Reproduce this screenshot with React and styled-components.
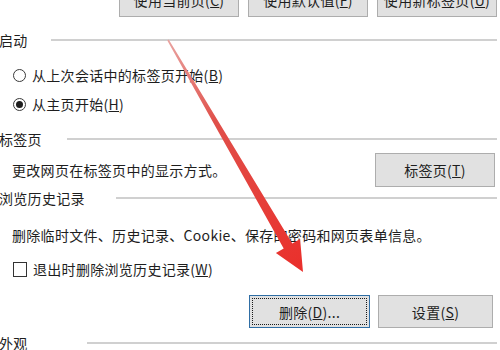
import React from "react";
import styled, { createGlobalStyle } from "styled-components";

const GlobalStyle = createGlobalStyle`
  html, body {
    margin: 0;
    padding: 0;
    background: #ffffff;
    overflow: hidden;
  }
  body {
    font-family: "Noto Sans CJK SC", "Noto Sans", sans-serif;
    color: #1e1e1e;
  }
`;

const Page = styled.div`
  position: relative;
  width: 500px;
  height: 350px;
  overflow: hidden;
  font-size: 14px;
  letter-spacing: 0.3px;
`;

const Panel = styled.div`
  display: flex;
  flex-direction: column;
  padding-right: 3px;
`;

const ButtonRow = styled.div`
  display: flex;
  justify-content: flex-end;
  align-items: center;
  gap: ${(p) => p.gap || 9}px;
  margin-top: ${(p) => p.top}px;
  padding-right: ${(p) => p.right || 0}px;
`;

const Button = styled.button`
  width: ${(p) => p.w || 120}px;
  height: ${(p) => p.h || 34}px;
  background: #e1e1e1;
  border: 1px solid ${(p) => (p.focused ? "#2f6ea5" : "#adadad")};
  outline: ${(p) => (p.focused ? "1px dotted #1a1a1a" : "none")};
  outline-offset: -4px;
  font-family: "Noto Sans CJK SC", "Noto Sans", sans-serif;
  font-size: 14px;
  letter-spacing: 0.3px;
  color: #1e1e1e;
  padding: 0;
  box-sizing: border-box;
`;

const Legend = styled.div`
  display: flex;
  align-items: center;
  height: 20px;
  margin-top: ${(p) => p.top}px;
`;

const LegendText = styled.span`
  width: ${(p) => p.w}px;
  flex: none;
  font-size: 14px;
  margin-left: -1px;
`;

const LegendLine = styled.div`
  flex: 1;
  height: 2px;
  background: #d0d0d0;
`;

const OptionRow = styled.div`
  display: flex;
  align-items: center;
  height: 22px;
  margin-top: ${(p) => p.top}px;
  padding-left: 13px;
  gap: 6px;
`;

const Radio = styled.span`
  width: 13px;
  height: 13px;
  border: 1px solid #3a3a3a;
  border-radius: 50%;
  box-sizing: border-box;
  display: flex;
  align-items: center;
  justify-content: center;
  &::after {
    content: "";
    width: 7px;
    height: 7px;
    border-radius: 50%;
    background: ${(p) => (p.checked ? "#1e1e1e" : "transparent")};
  }
`;

const Checkbox = styled.span`
  width: 14px;
  height: 15px;
  border: 1px solid #333;
  box-sizing: border-box;
`;

const DescRow = styled.div`
  display: flex;
  align-items: center;
  justify-content: space-between;
  height: ${(p) => p.h || 22}px;
  margin-top: ${(p) => p.top}px;
  padding-left: 12px;
  padding-right: ${(p) => p.right || 0}px;
`;

const Arrow = styled.svg`
  position: absolute;
  left: 0;
  top: 0;
  pointer-events: none;
`;

export default function App() {
  return (
    <Page>
      <GlobalStyle />
      <Panel>
        <ButtonRow top={-17} gap={9}>
          <Button>使用当前页(<u>C</u>)</Button>
          <Button>使用默认值(<u>F</u>)</Button>
          <Button>使用新标签页(<u>U</u>)</Button>
        </ButtonRow>

        <Legend top={13}>
          <LegendText w={52}>启动</LegendText>
          <LegendLine />
        </Legend>
        <OptionRow top={14}>
          <Radio />
          <span>从上次会话中的标签页开始(<u>B</u>)</span>
        </OptionRow>
        <OptionRow top={7}>
          <Radio checked />
          <span>从主页开始(<u>H</u>)</span>
        </OptionRow>

        <Legend top={14}>
          <LegendText w={68}>标签页</LegendText>
          <LegendLine />
        </Legend>
        <DescRow h={34} top={4} right={2}>
          <span>更改网页在标签页中的显示方式。</span>
          <Button>标签页(<u>T</u>)</Button>
        </DescRow>

        <Legend top={1}>
          <LegendText w={117}>浏览历史记录</LegendText>
          <LegendLine />
        </Legend>
        <DescRow top={16}>
          <span>删除临时文件、历史记录、Cookie、保存的密码和网页表单信息。</span>
        </DescRow>
        <OptionRow top={12}>
          <Checkbox />
          <span>退出时删除浏览历史记录(<u>W</u>)</span>
        </OptionRow>
        <ButtonRow top={15} gap={8} right={4}>
          <Button focused h={33} w={121}>删除(<u>D</u>)...</Button>
          <Button h={33} w={115}>设置(<u>S</u>)</Button>
        </ButtonRow>

        <Legend top={5}>
          <LegendText w={88}>外观</LegendText>
          <LegendLine />
        </Legend>
      </Panel>

      <Arrow width="500" height="350" viewBox="0 0 500 350">
        <defs>
          <linearGradient id="arrowFill" x1="168" y1="40" x2="303" y2="272" gradientUnits="userSpaceOnUse">
            <stop offset="0" stopColor="#e9a3a0" />
            <stop offset="0.35" stopColor="#e0504a" />
            <stop offset="1" stopColor="#ea2f2b" />
          </linearGradient>
        </defs>
        <polygon
          points="168.7,39.6 292.3,243.5 300.1,239 303,272 275.9,253 283.7,248.5 167.3,40.4"
          fill="url(#arrowFill)"
        />
      </Arrow>
    </Page>
  );
}
